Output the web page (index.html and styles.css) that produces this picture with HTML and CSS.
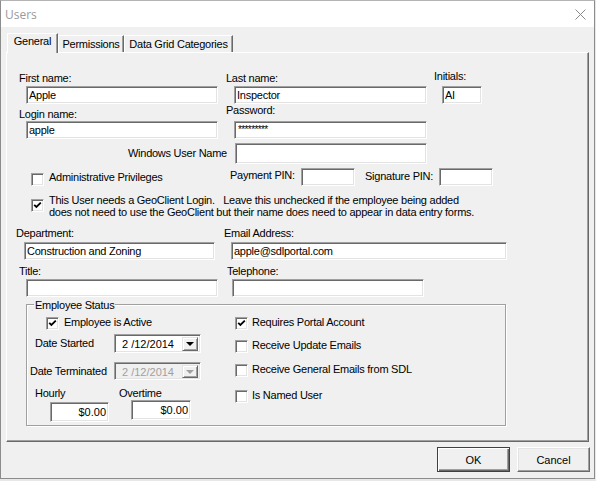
FILE: index.html
```html
<!DOCTYPE html>
<html lang="en">
  <head>
    <meta charset="UTF-8" />
    <meta name="viewport" content="width=device-width, initial-scale=1.0" />
    <title>Users</title>
    <link rel="stylesheet" href="styles.css">
  </head>
  <body>
    <div class="window">
      <div class="titlebar">
        <span class="caption">Users</span>
        <svg class="close" width="11" height="11" viewBox="0 0 11 11">
          <path d="M0.5 0.5 L10.5 10.5 M10.5 0.5 L0.5 10.5" stroke="#8a8a8a" stroke-width="1" fill="none" />
        </svg>
      </div>

      <div class="client">
        <div class="tabs">
          <div class="tab active">General</div>
          <div class="tab">Permissions</div>
          <div class="tab">Data Grid Categories</div>
        </div>

        <div class="panel">
          <div class="row row-names">
            <div class="field f-first">
              <label>First name:</label>
              <div class="edit w192">Apple</div>
            </div>
            <div class="field f-last">
              <label>Last name:</label>
              <div class="edit w193">Inspector</div>
            </div>
            <div class="field f-initials">
              <label class="raised">Initials:</label>
              <div class="edit w40">AI</div>
            </div>
          </div>

          <div class="row row-login">
            <div class="field f-first">
              <label>Login name:</label>
              <div class="edit w192">apple</div>
            </div>
            <div class="field f-last">
              <label class="raised-more">Password:</label>
              <div class="edit w193 secret">*********</div>
            </div>
          </div>

          <div class="row row-winuser">
            <label class="right-label">Windows User Name</label>
            <div class="edit w192 tall"></div>
          </div>

          <div class="row row-pins">
            <div class="check-line admin">
              <span class="checkbox"></span>
              <span class="check-text">Administrative Privileges</span>
            </div>
            <label class="pin-label pay">Payment PIN:</label>
            <div class="edit w54"></div>
            <label class="pin-label sig">Signature PIN:</label>
            <div class="edit w54"></div>
          </div>

          <div class="row row-geo">
            <span class="checkbox checked">
              <svg width="9" height="9" viewBox="0 0 9 9"><path d="M1.2 3.8 L3.4 6 L7.8 1.6" stroke="#000" stroke-width="1.8" fill="none" /></svg>
            </span>
            <p class="geo-note">This User needs a GeoClient Login.&nbsp;&nbsp; Leave this unchecked if the employee being added<br>does not need to use the GeoClient but their name does need to appear in data entry forms.</p>
          </div>

          <div class="row row-dept">
            <div class="field f-dept">
              <label>Department:</label>
              <div class="edit w191">Construction and Zoning</div>
            </div>
            <div class="field f-email">
              <label>Email Address:</label>
              <div class="edit w276">apple@sdlportal.com</div>
            </div>
          </div>

          <div class="row row-title">
            <div class="field f-title">
              <label>Title:</label>
              <div class="edit w192"></div>
            </div>
            <div class="field f-phone">
              <label>Telephone:</label>
              <div class="edit w192"></div>
            </div>
          </div>

          <div class="group">
            <div class="group-title">Employee Status</div>
            <div class="group-cols">
              <div class="col-left">
                <div class="status-row active-row">
                  <span class="checkbox checked">
                    <svg width="9" height="9" viewBox="0 0 9 9"><path d="M1.2 3.8 L3.4 6 L7.8 1.6" stroke="#000" stroke-width="1.8" fill="none" /></svg>
                  </span>
                  <span class="check-text">Employee is Active</span>
                </div>
                <div class="date-row started">
                  <label class="date-label">Date Started</label>
                  <div class="combo">
                    <span class="combo-text">2 /12/2014</span>
                    <span class="combo-btn"><span class="arrow"></span></span>
                  </div>
                </div>
                <div class="date-row terminated">
                  <label class="date-label">Date Terminated</label>
                  <div class="combo disabled">
                    <span class="combo-text">2 /12/2014</span>
                    <span class="combo-btn"><span class="arrow"></span></span>
                  </div>
                </div>
                <div class="rate-labels">
                  <label class="rate-label">Hourly</label>
                  <label>Overtime</label>
                </div>
                <div class="rate-inputs">
                  <div class="edit money hourly">$0.00</div>
                  <div class="edit money overtime">$0.00</div>
                </div>
              </div>

              <div class="col-right">
                <div class="option">
                  <span class="checkbox checked">
                    <svg width="9" height="9" viewBox="0 0 9 9"><path d="M1.2 3.8 L3.4 6 L7.8 1.6" stroke="#000" stroke-width="1.8" fill="none" /></svg>
                  </span>
                  <span class="check-text">Requires Portal Account</span>
                </div>
                <div class="option">
                  <span class="checkbox"></span>
                  <span class="check-text">Receive Update Emails</span>
                </div>
                <div class="option">
                  <span class="checkbox"></span>
                  <span class="check-text">Receive General Emails from SDL</span>
                </div>
                <div class="option">
                  <span class="checkbox"></span>
                  <span class="check-text">Is Named User</span>
                </div>
              </div>
            </div>
          </div>
        </div>

        <div class="buttons">
          <button class="btn default">OK</button>
          <button class="btn">Cancel</button>
        </div>
      </div>
    </div>
  </body>
</html>
```

FILE: styles.css
```css
* {
  box-sizing: border-box;
}
body {
  margin: 0;
  background: #e8e8e8;
  font-family: "Liberation Sans", Arial, sans-serif;
  font-size: 11px;
  letter-spacing: -0.25px;
  color: #000;
}
label {
  display: block;
  line-height: 13px;
  height: 13px;
  white-space: nowrap;
}

/* window frame */
.window {
  width: 595px;
  height: 479px;
  border: 1px solid #8c8c8c;
  border-top-color: #b4b4b4;
  background: #f0f0f0;
}
.titlebar {
  height: 26px;
  background: #fff;
  display: flex;
  align-items: center;
  padding-left: 4px;
}
.caption {
  flex: 1;
  font-family: "Open Sans", "Noto Sans", sans-serif;
  font-size: 12px;
  letter-spacing: 0;
  color: #9a9a9a;
}
.close {
  margin-right: 8px;
}
.client {
  padding-top: 6px;
}

/* tabs */
.tabs {
  display: flex;
  align-items: flex-end;
  height: 20px;
  margin-left: 6px;
}
.tab {
  height: 17px;
  margin-bottom: 1px;
  padding-top: 2px;
  text-align: center;
  line-height: 13px;
  border-left: 1px solid #fff;
  border-top: 1px solid #fff;
  border-right: 1px solid #696969;
  box-shadow: inset -1px 0 0 #a0a0a0;
  background: #f0f0f0;
}
.tab.active {
  position: relative;
  z-index: 1;
  height: 20px;
  margin-bottom: 0;
  padding-top: 1px;
  width: 51px;
}
.tab:nth-child(2) {
  width: 66px;
}
.tab:nth-child(3) {
  width: 109px;
}
.panel {
  margin: -1px 0 0 5px;
  width: 583px;
  height: 390px;
  border-top: 1px solid #fff;
  border-left: 1px solid #fff;
  border-right: 1px solid #696969;
  border-bottom: 1px solid #696969;
  box-shadow: inset -1px -1px 0 #a0a0a0;
}

/* sunken text boxes */
.edit {
  height: 18px;
  background: #fff;
  border: 1px solid;
  border-color: #a0a0a0 #fff #fff #a0a0a0;
  box-shadow: inset 1px 1px 0 #696969, inset -1px -1px 0 #e3e3e3;
  padding: 1px 0 0 2px;
  line-height: 14px;
  white-space: nowrap;
  overflow: hidden;
}
.edit.tall {
  height: 21px;
}
.edit.secret {
  font-size: 10px;
  letter-spacing: -0.6px;
  padding-left: 3px;
}
.w40 { width: 40px; }
.w54 { width: 54px; }
.w191 { width: 191px; }
.w192 { width: 192px; }
.w193 { width: 193px; }
.w276 { width: 276px; }

.row {
  display: flex;
  align-items: flex-start;
}
.field label {
  margin-bottom: 1px;
}
.field label.raised {
  margin-top: -2px;
  margin-bottom: 3px;
}
.field label.raised-more {
  margin-top: -4px;
  margin-bottom: 5px;
}

.row-names {
  margin-top: 19px;
}
.f-first {
  margin-left: 12px;
  width: 207px;
}
.f-first .edit {
  margin-left: 7px;
}
.f-last {
  width: 208px;
}
.f-last .edit,
.f-initials .edit {
  margin-left: 8px;
}
.row-login {
  margin-top: 4px;
}
.row-login .field label {
  margin-bottom: 0;
}
.row-login .field label.raised-more {
  margin-bottom: 4px;
}
.row-winuser {
  margin-top: 4px;
  align-items: center;
}
.right-label {
  width: 220px;
  text-align: right;
  margin-right: 8px;
}

/* checkboxes */
.checkbox {
  flex: none;
  display: flex;
  align-items: center;
  justify-content: center;
  width: 13px;
  height: 13px;
  background: #fff;
  border: 1px solid;
  border-color: #a0a0a0 #fff #fff #a0a0a0;
  box-shadow: inset 1px 1px 0 #696969, inset -1px -1px 0 #e3e3e3;
}
.check-text {
  line-height: 13px;
  white-space: nowrap;
}

.row-pins {
  margin-top: 4px;
}
.check-line {
  display: flex;
  align-items: flex-start;
}
.check-line.admin {
  margin-left: 24px;
  width: 199px;
}
.check-line .checkbox {
  margin-top: 5px;
}
.check-line .check-text {
  margin: 3px 0 0 5px;
}
.pin-label.pay {
  width: 71px;
  margin-top: 1px;
}
.pin-label.sig {
  width: 74px;
  margin: 2px 0 0 10px;
}

.row-geo {
  margin-top: 8px;
}
.row-geo .checkbox {
  margin: 5px 0 0 24px;
}
.geo-note {
  margin: 0 0 0 5px;
  line-height: 12px;
  white-space: nowrap;
}

.row-dept {
  margin-top: 9px;
}
.row-dept .field label {
  margin-bottom: 2px;
}
.f-dept {
  margin-left: 9px;
  width: 208px;
}
.f-dept .edit {
  margin-left: 8px;
}
.f-email .edit {
  margin-left: 7px;
}
.row-title {
  margin-top: 5px;
}
.f-title {
  margin-left: 12px;
  width: 208px;
}
.f-title .edit {
  margin-left: 7px;
}
.f-phone .edit {
  margin-left: 5px;
}

/* Employee Status group */
.group {
  margin: 7px 0 0 19px;
  width: 480px;
  height: 122px;
  border: 1px solid #a0a0a0;
  box-shadow: inset 1px 1px 0 #fff, 1px 1px 0 #fff;
}
.group-title {
  width: fit-content;
  margin: -6px 0 0 7px;
  padding: 0 1px;
  line-height: 13px;
  background: #f0f0f0;
}
.group-cols {
  display: grid;
  grid-template-columns: 208px 1fr;
}
.status-row,
.option {
  display: flex;
  align-items: flex-start;
  height: 14px;
}
.status-row .checkbox,
.option .checkbox {
  margin-top: 1px;
}
.active-row {
  margin: 4px 0 0 19px;
}
.active-row .check-text {
  margin-left: 5px;
}
.option .check-text {
  margin-left: 4px;
}
.option:nth-child(1) { margin-top: 4px; }
.option:nth-child(2) { margin-top: 9px; }
.option:nth-child(3) { margin-top: 10px; }
.option:nth-child(4) { margin-top: 12px; }

.date-row {
  display: flex;
  align-items: center;
}
.date-row.started {
  margin-top: 4px;
}
.date-row.started .date-label {
  margin-left: 8px;
  width: 79px;
}
.date-row.terminated {
  margin-top: 9px;
}
.date-row.terminated .date-label {
  margin-left: 3px;
  width: 84px;
}
.combo {
  display: flex;
  width: 87px;
  height: 19px;
  background: #fff;
  border: 1px solid;
  border-color: #a0a0a0 #fff #fff #a0a0a0;
  box-shadow: inset 1px 1px 0 #696969, inset -1px -1px 0 #e3e3e3;
  padding: 2px 2px 1px 2px;
}
.terminated .combo {
  height: 18px;
}
.combo-text {
  flex: 1;
  padding-left: 5px;
  line-height: 14px;
  letter-spacing: 0;
}
.combo-btn {
  width: 16px;
  display: flex;
  align-items: center;
  justify-content: center;
  background: #f0f0f0;
  border: 1px solid;
  border-color: #e3e3e3 #696969 #696969 #e3e3e3;
  box-shadow: inset 1px 1px 0 #fff, inset -1px -1px 0 #a0a0a0;
}
.arrow {
  width: 0;
  height: 0;
  border-left: 4px solid transparent;
  border-right: 4px solid transparent;
  border-top: 4px solid #000;
}
.combo.disabled {
  background: #f0f0f0;
  color: #a0a0a0;
}
.combo.disabled .arrow {
  border-top-color: #a0a0a0;
}

.rate-labels {
  display: flex;
  margin-top: 7px;
}
.rate-label {
  margin-left: 8px;
  width: 84px;
}
.rate-inputs {
  display: flex;
  align-items: flex-start;
}
.edit.money {
  height: 20px;
  text-align: right;
  padding: 2px 2px 0 0;
  letter-spacing: 0;
}
.edit.hourly {
  margin: 2px 0 0 23px;
  width: 59px;
}
.edit.overtime {
  margin-left: 22px;
  width: 60px;
}

/* dialog buttons */
.buttons {
  display: flex;
  justify-content: flex-end;
  gap: 7px;
  margin: 5px 4px 0 0;
}
.btn {
  width: 73px;
  height: 25px;
  padding: 0;
  font: inherit;
  letter-spacing: 0;
  color: #000;
  background: #f0f0f0;
  border: 1px solid;
  border-color: #fff #696969 #696969 #fff;
  box-shadow: inset -1px -1px 0 #a0a0a0, inset 1px 1px 0 #e3e3e3;
}
.btn.default {
  border-color: #404040;
  box-shadow: inset 1px 1px 0 #fff, inset -1px -1px 0 #696969, inset -2px -2px 0 #a0a0a0;
}
```
